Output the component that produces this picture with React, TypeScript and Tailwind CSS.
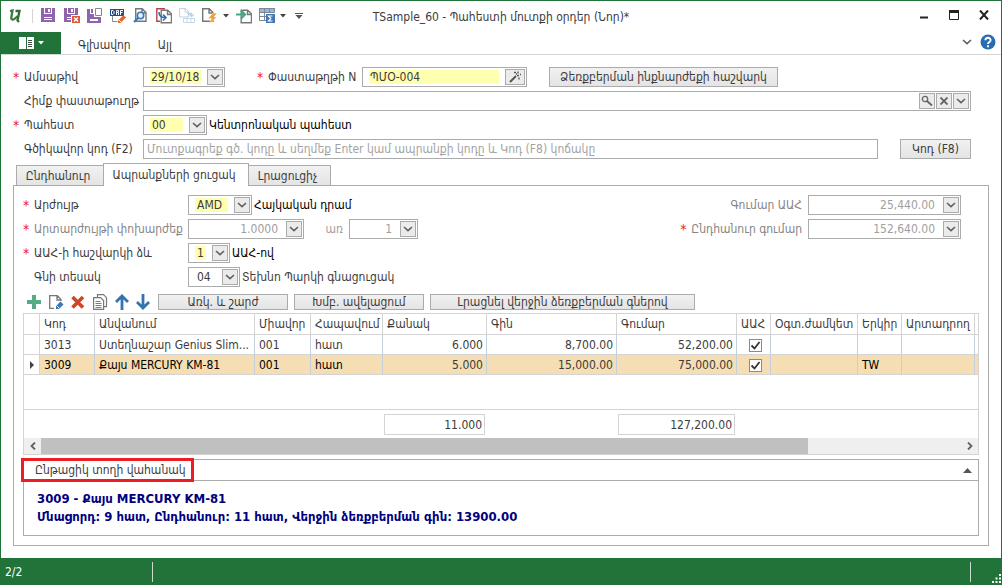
import { useId, useRef, useState } from "react";
import type { ReactNode } from "react";

type Row = {
  code: string;
  name: string;
  unit: string;
  short: string;
  qty: string;
  price: string;
  sum: string;
  vat: boolean;
  country: string;
};

const rows: Row[] = [
  {
    code: "3013",
    name: "Ստեղնաշար Genius Slim...",
    unit: "001",
    short: "հատ",
    qty: "6.000",
    price: "8,700.00",
    sum: "52,200.00",
    vat: true,
    country: "",
  },
  {
    code: "3009",
    name: "Քայս MERCURY KM-81",
    unit: "001",
    short: "հատ",
    qty: "5.000",
    price: "15,000.00",
    sum: "75,000.00",
    vat: true,
    country: "TW",
  },
];

const columns = [
  { title: "", width: "w-[16px]" },
  { title: "Կոդ", width: "w-[55px]" },
  { title: "Անվանում", width: "w-[160px]" },
  { title: "Միավոր", width: "w-[56px]" },
  { title: "Հապավում", width: "w-[72px]" },
  { title: "Քանակ", width: "w-[104px]" },
  { title: "Գին", width: "w-[130px]" },
  { title: "Գումար", width: "w-[120px]" },
  { title: "ԱԱՀ", width: "w-[34px]" },
  { title: "Օգտ.ժամկետ", width: "w-[87px]" },
  { title: "Երկիր", width: "w-[44px]" },
  { title: "Արտադրող", width: "w-[73px]" },
  { title: "", width: "" },
];

const Svg = ({ children, w = 16, h = 16 }: { children: ReactNode; w?: number; h?: number }) => (
  <svg width={w} height={h} viewBox={`0 0 ${w} ${h}`} fill="none" className="shrink-0" aria-hidden="true">
    {children}
  </svg>
);

const Chevron = () => (
  <Svg w={10} h={6}>
    <path d="M1 1l4 3.6L9 1" stroke="#606060" strokeWidth="1.6" />
  </Svg>
);

const Caret = () => (
  <Svg w={6} h={4}>
    <path d="M0 0h6L3 3.5z" fill="#444" />
  </Svg>
);

const Page = () => (
  <path
    d="M.7.7h6.5l3.8 3.8v8.8H.7zM7 1v4h4"
    fill="#fff"
    stroke="#777"
    strokeWidth="1.4"
  />
);

const SaveIcon = () => (
  <Svg>
    <path d="M0 0h14v14H0z" fill="#9063ad" />
    <path d="M3 0h8v6H3zM3 9h8v3H3z" fill="#fff" />
    <path d="M4 0h6v5H4zM3 10h8v1H3z" fill="#9063ad" />
    <path d="M7 1h2v3H7z" fill="#fff" />
  </Svg>
);

const SaveCloseIcon = () => (
  <Svg>
    <path d="M0 0h14v14H0z" fill="#9063ad" />
    <path d="M3 0h8v6H3zM3 9h5v3H3z" fill="#fff" />
    <path d="M4 0h6v5H4zM3 10h5v1H3z" fill="#9063ad" />
    <path d="M7 1h2v3H7zM7 7h9v8H7z" fill="#fff" />
    <path d="M8 8h8v7H8z" fill="#dd5a3a" />
    <path d="M10 9.5l4 4M14 9.5l-4 4" stroke="#fff" strokeWidth="1.3" />
  </Svg>
);

const SaveNewIcon = () => (
  <Svg>
    <path d="M0 1h7v8h7v6H0z" fill="#9063ad" />
    <path d="M3 1h4v5H3zM3 11h8v2H3z" fill="#fff" />
    <path d="M4 1h2v4H4z" fill="#9063ad" />
    <path d="M8.500.5h6v7h-6z" fill="#fff" stroke="#888" />
  </Svg>
);

const DraftIcon = () => (
  <Svg>
    <path d="M2.500 8v5.500h5" stroke="#888" />
    <path d="M0 1h14v7H0z" fill="#1d4f8f" />
    <path
      d="M1.500 2.500v4H3l1-1v-2l-1-1zM6.500 7V2.500h2v2h-2M8.500 5v2M10.500 7V2.500H13M10.500 4.500h2"
      stroke="#fff"
    />
    <path d="M13.500 7L16 9.500 10.500 15H8v-2.500z" fill="#dd6a3a" />
    <path d="M9 12l2 2" stroke="#fff" />
  </Svg>
);

const PreviewIcon = () => (
  <Svg>
    <g transform="translate(2 0)"><Page /></g>
    <circle cx="7.500" cy="7.500" r="3.200" fill="#e8f2fb" stroke="#3b78b5" strokeWidth="1.600" />
    <path d="M5 10l-4 4" stroke="#3b78b5" strokeWidth="2.200" />
  </Svg>
);

const CopyFromIcon = () => (
  <Svg>
    <path d="M9 .8H.8v12.400H4" stroke="#b8434a" strokeWidth="1.400" />
    <g transform="translate(4.500 1.500)"><Page /></g>
    <path d="M3 4c0 4 2 5.500 6 5.500M7 6.500l3 3-3 3" stroke="#2f70b0" strokeWidth="1.600" />
  </Svg>
);

const CopyToIcon = () => (
  <Svg>
    <path d="M.6.6h6l3 3V9H.6zM6 1v3h3" stroke="#bcd0e4" />
    <path d="M8 5.500h4.500V8M10.500 6.500l2 2 2-2" stroke="#bcd0e4" strokeWidth="1.300" />
    <path d="M4.500 10.500h11v4h-11zM8 10.500v4M12 10.500v4" stroke="#c9d8e6" />
  </Svg>
);

const ActionIcon = () => (
  <Svg>
    <Page />
    <path d="M11 5h4l-3 4h3l-8 7 2.500-5.500H6z" fill="#eda02f" stroke="#fff" strokeWidth=".5" />
  </Svg>
);

const ImportIcon = () => (
  <Svg>
    <g transform="translate(4.500 1.500)"><Page /></g>
    <path d="M0 6.500h8M5 2.500l4 4-4 4" stroke="#43a883" strokeWidth="2.200" />
  </Svg>
);

const TotalsIcon = () => (
  <Svg>
    <path d="M0 0h16v4H0z" fill="#9ab7d6" />
    <path d="M.5.5h15v4H.5zM.5 4.500v8H7M.5 8.500H7M5.500.5v12M10.500.5v4" stroke="#7d8793" />
    <path d="M7 6h9v9H7z" fill="#3f78b5" />
    <path d="M13.500 8H9.500l2.300 2.500L9.500 13h4" stroke="#fff" strokeWidth="1.200" />
  </Svg>
);

const PlusIcon = () => (
  <Svg>
    <path d="M6 1h4v5h5v4h-5v5H6v-5H1V6h5z" fill="#55ab84" />
  </Svg>
);

const EditIcon = () => (
  <Svg>
    <path d="M6 14.300H1.700V1.700h7.600L13 5.400V7M9 2v4h4" stroke="#777" strokeWidth="1.300" />
    <path d="M12.500 7.500l3 3-4.500 4.500H8v-3z" fill="#3d78b5" />
    <path d="M8.500 11.500l3 3" stroke="#fff" />
  </Svg>
);

const DeleteIcon = () => (
  <Svg>
    <path d="M2.500 3l10.500 10.500M13 3L2.500 13.500" stroke="#cf4527" strokeWidth="3.600" />
  </Svg>
);

const DuplicateIcon = () => (
  <Svg>
    <path d="M5.500 3V.7h6l3 3v9H12" stroke="#777" strokeWidth="1.200" />
    <path d="M1.600 3.600h7l3 3v8.800h-10z" fill="#fff" stroke="#777" strokeWidth="1.200" />
    <path d="M3.500 7.500h5M3.500 9.500h6M3.500 11.500h6M3.500 13.500h6" stroke="#4a86c0" />
  </Svg>
);

const UpIcon = () => (
  <Svg>
    <path d="M8 16V2.500M2 8l6-6 6 6" stroke="#3572b0" strokeWidth="2.800" />
  </Svg>
);

const DownIcon = () => (
  <Svg>
    <path d="M8 0v13.500M2 8l6 6 6-6" stroke="#3572b0" strokeWidth="2.800" />
  </Svg>
);

const IconButton = ({ label, children }: { label: string; children: ReactNode }) => (
  <button type="button" aria-label={label} className="flex shrink-0 items-center">
    {children}
  </button>
);

const BoxButton = ({
  label,
  wide,
  onClick,
  children,
}: {
  label: string;
  wide?: boolean;
  onClick?: () => void;
  children: ReactNode;
}) => (
  <button
    type="button"
    aria-label={label}
    onClick={onClick}
    className={`flex h-4 shrink-0 items-center justify-center border border-[#ababab] bg-[#ebebeb] ${wide ? "w-5" : "w-4"}`}
  >
    {children}
  </button>
);

const PushButton = ({ className, children }: { className: string; children: ReactNode }) => (
  <button
    type="button"
    className={`flex items-center justify-center border border-[#ababab] bg-linear-to-b from-[#f1f1f1] to-[#e4e4e4] whitespace-nowrap ${className}`}
  >
    {children}
  </button>
);

const Label = ({
  htmlFor,
  required,
  muted,
  className = "",
  children,
}: {
  htmlFor?: string;
  required?: boolean;
  muted?: boolean;
  className?: string;
  children: ReactNode;
}) => (
  <label
    htmlFor={htmlFor}
    className={`flex shrink-0 whitespace-nowrap ${muted ? "text-[#858585]" : ""} ${className}`}
  >
    <span className="w-[11px] shrink-0 text-[14px] text-[#f01414]">{required ? "*" : ""}</span>
    {children}
  </label>
);

const TextCombo = ({
  id,
  value,
  width,
  required,
  disabled,
  wand,
}: {
  id: string;
  value: string;
  width: string;
  required?: boolean;
  disabled?: boolean;
  wand?: boolean;
}) => (
  <div className={`flex h-5 shrink-0 items-center gap-1.5 border border-[#ababab] bg-white pr-px pl-1.5 ${width}`}>
    <input
      id={id}
      defaultValue={value}
      disabled={disabled}
      className={`h-[14px] min-w-0 flex-1 ${required ? "bg-[#ffffb0] pl-px" : ""} ${
        disabled ? "pr-0.5 text-right text-[#a0a0a0]" : ""
      }`}
    />
    <BoxButton label="Բացել" wide={wand}>
      {wand ? (
        <Svg w={12} h={12}>
          <path d="M1 11l6-6" stroke="#555" strokeWidth="2" />
          <path d="M5 1.500h2M9 .5v2M8 4.500h2M10 6.500v2M11 3.500h1M7 3h1" stroke="#555" strokeWidth="1.300" />
        </Svg>
      ) : (
        <Chevron />
      )}
    </BoxButton>
  </div>
);

const SelectCombo = ({
  id,
  value,
  width,
  required,
}: {
  id: string;
  value: string;
  width: string;
  required?: boolean;
}) => {
  const ref = useRef<HTMLSelectElement>(null);
  return (
    <div className={`flex h-5 shrink-0 items-center gap-1.5 border border-[#ababab] bg-white pr-px pl-1.5 ${width}`}>
      <select
        id={id}
        ref={ref}
        defaultValue={value}
        className={`h-[14px] min-w-0 flex-1 appearance-none px-0.5 leading-[14px] ${required ? "bg-[#ffffb0]" : ""}`}
      >
        <option>{value}</option>
      </select>
      <BoxButton label="Բացել" onClick={() => ref.current?.showPicker()}>
        <Chevron />
      </BoxButton>
    </div>
  );
};

const TitleBar = () => (
  <header className="grid h-[31px] grid-cols-[1fr_auto_1fr] items-center">
    <div className="flex items-center gap-[7px] pb-px pl-2">
      <Svg w={12} h={16}>
        <path
          d="M1 3.200L3.500 2.500 2.300 9.500C2 12 4.500 12 6 10.500L8.800 8"
          stroke="#3c7a3f"
          strokeWidth="2.300"
        />
        <path d="M6.500 3h4L8.500 12.500 10 14" stroke="#2f6b35" strokeWidth="2.300" />
      </Svg>
      <span className="mr-px ml-1 h-3.5 w-px bg-[#d5d5d5]" />
      <IconButton label="Գրանցել"><SaveIcon /></IconButton>
      <IconButton label="Գրանցել և փակել"><SaveCloseIcon /></IconButton>
      <IconButton label="Գրանցել և նոր"><SaveNewIcon /></IconButton>
      <IconButton label="Սևագիր"><DraftIcon /></IconButton>
      <IconButton label="Դիտել"><PreviewIcon /></IconButton>
      <IconButton label="Պատճենել"><CopyFromIcon /></IconButton>
      <IconButton label="Տեղադրել"><CopyToIcon /></IconButton>
      <span className="flex items-center gap-[5px]">
        <IconButton label="Գործողություններ"><ActionIcon /></IconButton>
        <Caret />
      </span>
      <IconButton label="Ներմուծել"><ImportIcon /></IconButton>
      <span className="flex items-center gap-[5px]">
        <IconButton label="Հանրագումար"><TotalsIcon /></IconButton>
        <Caret />
      </span>
      <Svg w={10} h={6}>
        <path d="M2 .5h8" stroke="#555" />
        <path d="M2.500 2h7L6 6z" fill="#555" />
      </Svg>
    </div>
    <h1 className="whitespace-nowrap">TSample_60 - Պահեստի մուտքի օրդեր (Նոր)*</h1>
    <div className="flex items-center justify-end gap-5 pr-3 pb-1">
      <IconButton label="Ծալել">
        <Svg w={10} h={10}><path d="M1 7.500h8" stroke="#222" strokeWidth="2" /></Svg>
      </IconButton>
      <IconButton label="Մեծացնել">
        <Svg w={10} h={10}>
          <path d="M.5.5h9v9h-9z" stroke="#222" />
          <path d="M0 0h10v3H0z" fill="#222" />
        </Svg>
      </IconButton>
      <IconButton label="Փակել">
        <Svg w={10} h={10}><path d="M1 .5l8 9M9 .5l-8 9" stroke="#222" strokeWidth="2" /></Svg>
      </IconButton>
    </div>
  </header>
);

const Ribbon = () => (
  <nav className="flex h-[23px] border-b border-[#d5d5d5]">
    <button type="button" aria-label="Ցանկ" className="flex w-[60px] items-center justify-center gap-1 bg-[#217339]">
      <Svg w={15} h={12}>
        <path d="M0 0h15v12H0z" fill="#fff" />
        <path d="M7 0h1v12H7z" fill="#217339" />
        <path d="M9 3.500h4M9 5.500h4M9 7.500h4M9 9.500h4" stroke="#444" />
      </Svg>
      <Svg w={6} h={4}><path d="M0 0h6L3 3.500z" fill="#fff" /></Svg>
    </button>
    <button type="button" className="ml-[17px] pt-1">Գլխավոր</button>
    <button type="button" className="ml-[27px] pt-1">Այլ</button>
    <div className="ml-auto flex items-center gap-2 pr-[5px] pb-0.5">
      <IconButton label="Ծալել ժապավենը"><Chevron /></IconButton>
      <IconButton label="Օգնություն">
        <Svg>
          <circle cx="8" cy="8" r="7.500" fill="#2b6cb0" />
          <path d="M5.400 6.300C5.400 3 10.600 3 10.600 6.200 10.600 8 8 8 8 10M8 11.200v2" stroke="#fff" strokeWidth="1.900" />
        </Svg>
      </IconButton>
    </div>
  </nav>
);

const HeaderForm = () => {
  const id = useId();
  return (
    <div className="flex flex-col gap-1 pr-[18px]">
      <div className="flex h-5 items-center">
        <Label htmlFor={`${id}-date`} required className="w-[130px]">Ամսաթիվ</Label>
        <TextCombo id={`${id}-date`} value="29/10/18" width="w-[82px]" required />
        <Label htmlFor={`${id}-no`} required className="ml-8 w-[105px]">Փաստաթղթի N</Label>
        <TextCombo id={`${id}-no`} value="ՊՄՕ-004" width="w-[165px]" required wand />
        <PushButton className="ml-[22px] h-5 w-[229px]">Ձեռքբերման ինքնարժեքի հաշվարկ</PushButton>
      </div>
      <div className="flex h-5 items-center">
        <Label htmlFor={`${id}-base`} className="w-[130px]">Հիմք փաստաթուղթ</Label>
        <div className="flex h-5 flex-1 items-center gap-px border border-[#ababab] bg-white pr-px">
          <input id={`${id}-base`} className="min-w-0 flex-1 px-1" />
          <BoxButton label="Որոնել">
            <Svg w={12} h={12}>
              <circle cx="4" cy="4" r="2.700" stroke="#666" strokeWidth="1.300" />
              <path d="M6 6l5 4.500" stroke="#666" strokeWidth="1.800" />
            </Svg>
          </BoxButton>
          <BoxButton label="Մաքրել">
            <Svg w={8} h={8}><path d="M.5.5l7 7M7.500.5l-7 7" stroke="#606060" strokeWidth="1.800" /></Svg>
          </BoxButton>
          <BoxButton label="Բացել"><Chevron /></BoxButton>
        </div>
      </div>
      <div className="flex h-5 items-center">
        <Label htmlFor={`${id}-store`} required className="w-[130px]">Պահեստ</Label>
        <SelectCombo id={`${id}-store`} value="00" width="w-[64px]" required />
        <span className="ml-0.5 text-black">Կենտրոնական պահեստ</span>
      </div>
      <div className="flex h-5 items-center">
        <Label htmlFor={`${id}-bar`} className="w-[130px]">Գծիկավոր կոդ (F2)</Label>
        <input
          id={`${id}-bar`}
          placeholder="Մուտքագրեք գծ. կոդը և սեղմեք Enter կամ ապրանքի կոդը և Կոդ (F8) կոճակը"
          className="h-5 min-w-0 flex-1 border border-[#ababab] bg-white px-[3px] placeholder:text-[#a3a3a3]"
        />
        <PushButton className="ml-[22px] h-5 w-[71px]">Կոդ (F8)</PushButton>
      </div>
    </div>
  );
};

const PriceForm = () => {
  const id = useId();
  return (
    <div className="flex items-start justify-between pr-[18px]">
      <div className="flex flex-col gap-1">
        <div className="flex h-5 items-center">
          <Label htmlFor={`${id}-cur`} required className="w-[165px]">Արժույթ</Label>
          <SelectCombo id={`${id}-cur`} value="AMD" width="w-[64px]" required />
          <span className="ml-0.5 text-black">Հայկական դրամ</span>
        </div>
        <div className="flex h-5 items-center">
          <Label htmlFor={`${id}-rate`} required muted className="w-[165px]">Արտարժույթի փոխարժեք</Label>
          <TextCombo id={`${id}-rate`} value="1.0000" width="w-[116px]" disabled />
          <label htmlFor={`${id}-per`} className="w-[45px] pr-1.5 text-right text-[#a0a0a0]">առ</label>
          <TextCombo id={`${id}-per`} value="1" width="w-[69px]" disabled />
        </div>
        <div className="flex h-5 items-center">
          <Label htmlFor={`${id}-vat`} required className="w-[165px]">ԱԱՀ-ի հաշվարկի ձև</Label>
          <SelectCombo id={`${id}-vat`} value="1" width="w-[42px]" required />
          <span className="ml-0.5 text-black">ԱԱՀ-ով</span>
        </div>
        <div className="flex h-5 items-center">
          <Label htmlFor={`${id}-type`} className="w-[165px]">Գնի տեսակ</Label>
          <SelectCombo id={`${id}-type`} value="04" width="w-[52px]" />
          <span className="ml-0.5">Տեխնո Պարկի գնացուցակ</span>
        </div>
      </div>
      <div className="flex flex-col items-end gap-1">
        <div className="flex h-5 items-center gap-1.5">
          <Label htmlFor={`${id}-vatsum`} muted>Գումար ԱԱՀ</Label>
          <TextCombo id={`${id}-vatsum`} value="25,440.00" width="w-[153px]" disabled />
        </div>
        <div className="flex h-5 items-center gap-1.5">
          <Label htmlFor={`${id}-total`} required muted>Ընդհանուր գումար</Label>
          <TextCombo id={`${id}-total`} value="152,640.00" width="w-[153px]" disabled />
        </div>
      </div>
    </div>
  );
};

const RowTools = () => (
  <div className="mt-[7px] flex h-4 items-center gap-1.5 pl-[3px]">
    <div className="flex items-center gap-1.5 pr-px">
      <IconButton label="Ավելացնել"><PlusIcon /></IconButton>
      <IconButton label="Խմբագրել"><EditIcon /></IconButton>
      <IconButton label="Հեռացնել"><DeleteIcon /></IconButton>
      <IconButton label="Կրկնօրինակել"><DuplicateIcon /></IconButton>
      <span className="flex gap-[5px]">
        <IconButton label="Վերև"><UpIcon /></IconButton>
        <IconButton label="Ներքև"><DownIcon /></IconButton>
      </span>
    </div>
    <PushButton className="h-4 w-[130px]">Առկ. և շարժ</PushButton>
    <PushButton className="h-4 w-[130px]">Խմբ. ավելացում</PushButton>
    <PushButton className="h-4 w-[265px]">Լրացնել վերջին ձեռքբերման գներով</PushButton>
  </div>
);

const cell = "whitespace-nowrap border-r border-b border-[#c3cfdc] border-b-[#d4d4d4] pr-[3px] pl-1";

const GoodsTable = () => {
  const [selected, setSelected] = useState(1);
  return (
    <div className="mt-[3px] border border-[#d4d4d4]">
      <table className="w-full table-fixed border-separate border-spacing-0">
        <colgroup>
          {columns.map((c, i) => (
            <col key={i} className={c.width} />
          ))}
        </colgroup>
        <thead>
          <tr className="h-[21px]">
            {columns.map((c, i) => (
              <th
                key={i}
                className="border-r border-b border-[#d4d4d4] pl-1 text-left font-normal whitespace-nowrap last:border-r-0 last:pl-0"
              >
                {c.title}
              </th>
            ))}
          </tr>
        </thead>
        <tbody>
          {rows.map((row, i) => (
            <tr
              key={row.code}
              onClick={() => setSelected(i)}
              className={`h-5 ${selected === i ? "bg-[#f5deb3] text-black" : ""}`}
            >
              <td className="border-r border-b border-[#d4d4d4] bg-white">
                {selected === i ? (
                  <span className="flex justify-center">
                    <Svg w={4} h={8}><path d="M0 0l4 4-4 4z" fill="#444" /></Svg>
                  </span>
                ) : null}
              </td>
              <td className={cell}>{row.code}</td>
              <td className={cell}>{row.name}</td>
              <td className={cell}>{row.unit}</td>
              <td className={cell}>{row.short}</td>
              <td className={`${cell} text-right text-[#3c3c3c]`}>{row.qty}</td>
              <td className={`${cell} text-right text-[#3c3c3c]`}>{row.price}</td>
              <td className={`${cell} text-right text-[#3c3c3c]`}>{row.sum}</td>
              <td className="border-r border-b border-[#c3cfdc] border-b-[#d4d4d4]">
                <span className="relative flex justify-center pt-px pl-1">
                  <input
                    type="checkbox"
                    aria-label="ԱԱՀ"
                    defaultChecked={row.vat}
                    className="peer h-[13px] w-[13px] appearance-none border border-[#8a8a8a] bg-white"
                  />
                  <svg
                    width="13"
                    height="13"
                    viewBox="0 0 13 13"
                    fill="none"
                    aria-hidden="true"
                    className="pointer-events-none invisible absolute peer-checked:visible"
                  >
                    <path d="M2.500 6.500l3 3 5-6.500" stroke="#333" strokeWidth="1.800" />
                  </svg>
                </span>
              </td>
              <td className={cell} />
              <td className={cell}>{row.country}</td>
              <td className={cell} />
              <td className="border-b border-[#d4d4d4]" />
            </tr>
          ))}
          <tr className="h-[35px]">
            <td colSpan={13} className="border-b border-[#d4d4d4]" />
          </tr>
        </tbody>
        <tfoot>
          <tr className="h-7 align-middle">
            <td colSpan={5} />
            <td className="pr-0.5 pl-px">
              <div className="h-[21px] border border-[#d4d4d4] pr-0.5 text-right leading-5">11.000</div>
            </td>
            <td />
            <td className="pr-0.5 pl-px">
              <div className="h-[21px] border border-[#d4d4d4] pr-0.5 text-right leading-5">127,200.00</div>
            </td>
            <td colSpan={5} />
          </tr>
        </tfoot>
      </table>
      <div className="flex h-4 bg-[#efefef]">
        <button type="button" aria-label="Ոլորել ձախ" className="flex w-[17px] items-center justify-center">
          <Svg w={6} h={8}><path d="M5 .5L1.500 4 5 7.500" stroke="#606060" strokeWidth="1.800" /></Svg>
        </button>
        <div className="flex-1">
          <div className="h-full w-5/6 bg-[#c0c0c0]" />
        </div>
        <button type="button" aria-label="Ոլորել աջ" className="flex w-[17px] items-center justify-center">
          <Svg w={6} h={8}><path d="M1 .5L4.500 4 1 7.500" stroke="#606060" strokeWidth="1.800" /></Svg>
        </button>
      </div>
    </div>
  );
};

const CurrentRowPanel = () => (
  <section className="relative mt-1 border border-[#ababab]">
    <button
      type="button"
      className="flex h-[21px] w-full items-center justify-between border-b border-[#ababab] pr-1.5 pl-[11px]"
    >
      Ընթացիկ տողի վահանակ
      <Svg w={9} h={5}><path d="M4.500 0L9 5H0z" fill="#555" /></Svg>
    </button>
    <div className="h-[54px] px-[13px] pt-[9px] text-[13px] font-bold text-[#000080]">
      <p className="leading-[18px]">3009 - Քայս MERCURY KM-81</p>
      <p className="leading-[18px]">Մնացորդ: 9 հատ, Ընդհանուր: 11 հատ, Վերջին ձեռքբերման գին: 13900.00</p>
    </div>
    {/* highlight around the panel caption */}
    <div className="pointer-events-none absolute -top-0.5 -left-[3px] h-6 w-[173px] border-3 border-[#ee1c25]" />
  </section>
);

export default function App() {
  return (
    <div className="flex min-h-screen flex-col border-x border-t border-[#217339] bg-white font-['DejaVu_Sans_Condensed','DejaVu_Sans',sans-serif] text-[12px] leading-4 text-[#3c3c3c]">
      <TitleBar />
      <Ribbon />
      <main className="flex-1 px-3 pt-3 pb-3">
        <HeaderForm />
        <div role="tablist" className="mt-1 flex h-[22px] items-end pl-[3px]">
          <button type="button" role="tab" aria-selected="false" className="h-5 w-[87px] border border-r-0 border-b-0 border-[#ababab] bg-linear-to-b from-[#f1f1f1] to-[#e4e4e4] pr-1">
            Ընդհանուր
          </button>
          <button type="button" role="tab" aria-selected="true" className="relative z-10 -mb-px h-[23px] w-[146px] border border-b-0 border-[#ababab] bg-white pr-1">
            Ապրանքների ցուցակ
          </button>
          <button type="button" role="tab" aria-selected="false" className="h-5 w-[82px] border border-b-0 border-l-0 border-[#ababab] bg-linear-to-b from-[#f1f1f1] to-[#e4e4e4] pr-1">
            Լրացուցիչ
          </button>
        </div>
        <div role="tabpanel" className="border border-[#ababab] px-[9px] pt-[9px] pb-[9px]">
          <PriceForm />
          <RowTools />
          <GoodsTable />
          <CurrentRowPanel />
        </div>
      </main>
      <footer className="flex h-[27px] items-center bg-[#217339] text-white">
        <span className="w-[151px] pl-1">2/2</span>
        <span className="h-5 w-px bg-[#c8ddce]" />
        <span className="ml-auto h-5 w-px bg-[#c8ddce]" />
        <span className="flex h-full w-[30px] items-end justify-end pb-0.5">
          <Svg w={9} h={9}>
            <path d="M0 7h2v2H0zM3.500 7h2v2h-2zM7 7h2v2H7zM3.500 3.500h2v2h-2zM7 3.500h2v2H7zM7 0h2v2H7z" fill="#fff" />
          </Svg>
        </span>
      </footer>
    </div>
  );
}
